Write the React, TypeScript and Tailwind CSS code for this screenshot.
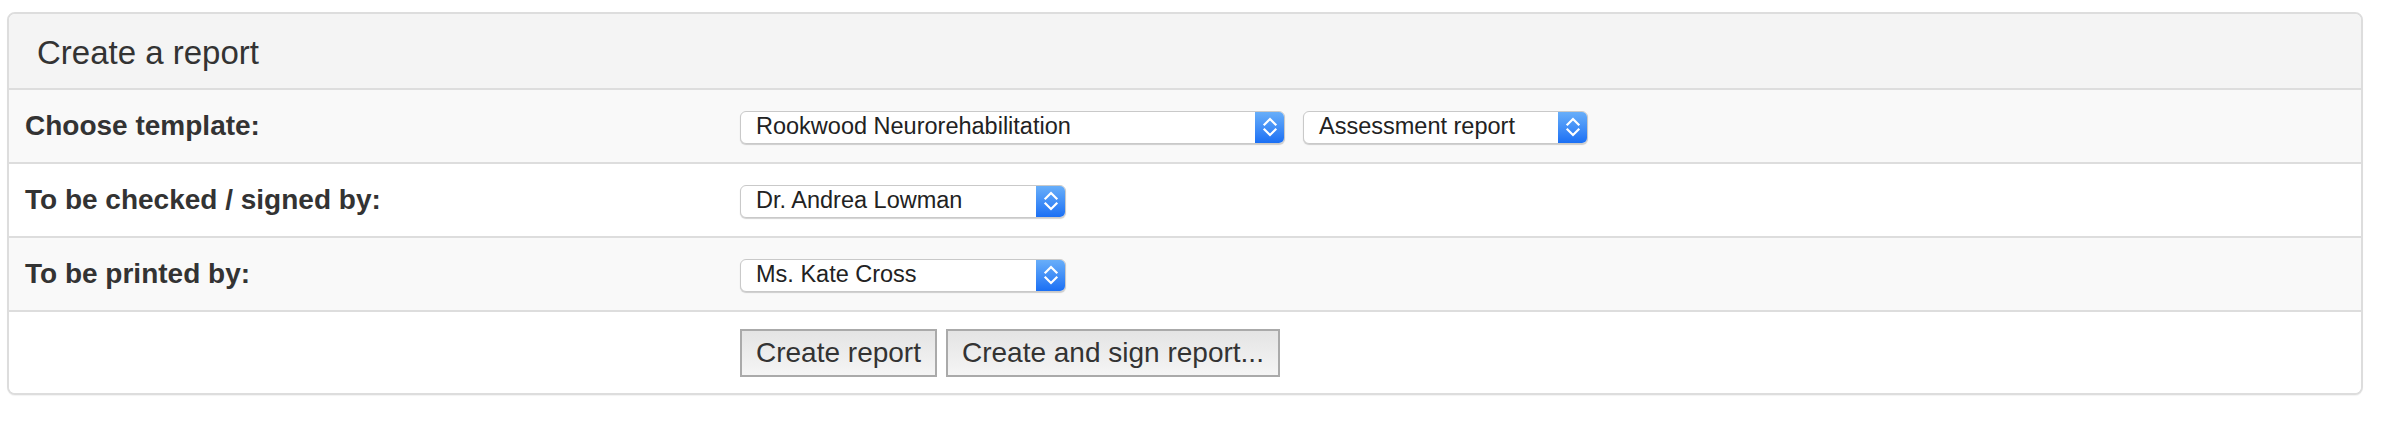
const font = { fontFamily: '"Liberation Sans", Arial, Helvetica, sans-serif' };

type SelectProps = {
  value: string;
  width: string;
};

const Chevrons = () => (
  <svg width="16" height="24" viewBox="0 0 16 24" fill="none">
    <path d="M2.5 9.5 L8 4 L13.5 9.5" stroke="white" strokeWidth="2.2" strokeLinecap="square" />
    <path d="M2.5 14.5 L8 20 L13.5 14.5" stroke="white" strokeWidth="2.2" strokeLinecap="square" />
  </svg>
);

const FakeSelect = ({ value, width }: SelectProps) => {
  return (
    <div
      className={`flex h-[33px] ${width} items-stretch overflow-hidden rounded-[6px] border border-[#c9c9c9] bg-white shadow-[0_1px_1px_rgba(0,0,0,0.18)]`}
    >
      <div className="flex flex-1 items-center pl-[15px] text-[23.5px] text-[#222]">
        {value}
      </div>
      <div className="flex w-[29px] items-center justify-center bg-gradient-to-b from-[#68aef9] to-[#1a6ff4]">
        <Chevrons />
      </div>
    </div>
  );
};

const rows = [
  {
    label: 'Choose template:',
    bg: 'bg-[#f9f9f9]',
    selects: [
      { value: 'Rookwood Neurorehabilitation', width: 'w-[545px]' },
      { value: 'Assessment report', width: 'w-[285px]' },
    ],
  },
  {
    label: 'To be checked / signed by:',
    bg: 'bg-white',
    selects: [{ value: 'Dr. Andrea Lowman', width: 'w-[326px]' }],
  },
  {
    label: 'To be printed by:',
    bg: 'bg-[#f9f9f9]',
    selects: [{ value: 'Ms. Kate Cross', width: 'w-[326px]' }],
  },
];

const App = () => {
  return (
    <div className="min-h-[424px] bg-white pl-[7px] pt-[12px]" style={font}>
      <div className="w-[2356px] overflow-hidden rounded-[8px] border-2 border-[#dddddd] bg-white text-[#333] shadow-[0_1px_1px_rgba(0,0,0,0.05)]">
        <div className="flex h-[76px] items-center border-b-2 border-[#dddddd] bg-[#f4f4f4] pl-[28px] pt-[3px]">
          <h3 className="text-[33px]">Create a report</h3>
        </div>

        {rows.map((row, index) => (
          <div
            key={'row-' + index}
            className={`flex items-center ${row.bg} ${index > 0 ? 'h-[74px] border-t-2 border-[#dddddd]' : 'h-[72px]'}`}
          >
            <div className="w-[715px] pl-[16px] text-[28px] font-bold">{row.label}</div>
            <div className="flex items-center gap-[18px] pl-[16px] pt-[2px]">
              {row.selects.map((sel, i) => (
                <FakeSelect key={'sel-' + i} value={sel.value} width={sel.width} />
              ))}
            </div>
          </div>
        ))}

        <div className="flex h-[83px] items-center border-t-2 border-[#dddddd] bg-white">
          <div className="w-[715px]" />
          <div className="flex gap-[9px] pl-[16px] pt-[1px]">
            <button className="h-[48px] border-2 border-[#aaaaaa] bg-gradient-to-b from-[#e4e4e4] to-[#f5f5f5] px-[14px] text-[28px] text-[#333]">
              Create report
            </button>
            <button className="h-[48px] border-2 border-[#aaaaaa] bg-gradient-to-b from-[#e4e4e4] to-[#f5f5f5] px-[14px] text-[28px] text-[#333]">
              Create and sign report...
            </button>
          </div>
        </div>
      </div>
    </div>
  );
};

export default App;
